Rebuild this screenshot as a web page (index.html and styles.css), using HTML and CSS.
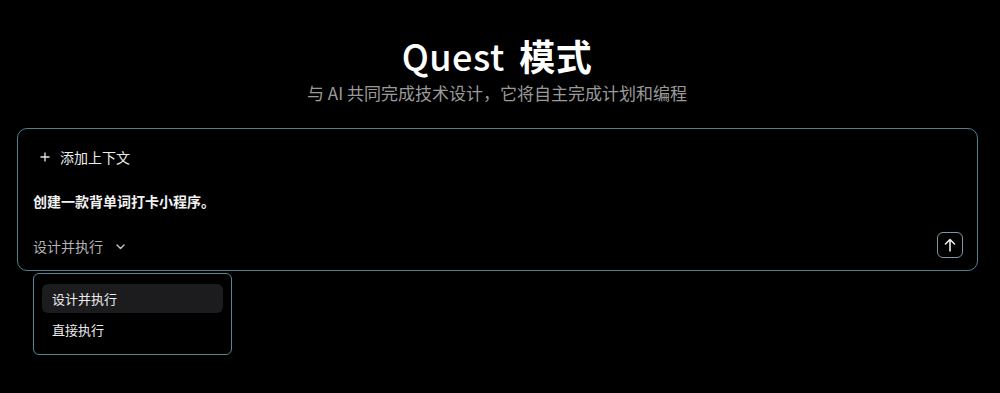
FILE: index.html
```html
<!DOCTYPE html>
<html lang="zh">
<head>
<meta charset="utf-8">
<title>Quest 模式</title>
<link rel="stylesheet" href="styles.css">
</head>
<body>
<main class="page">
  <header class="hero">
    <h1 class="title">Quest <span class="title-cn">模式</span></h1>
    <p class="subtitle">与 AI 共同完成技术设计，它将自主完成计划和编程</p>
  </header>
  <div class="composer-wrap">
    <section class="composer">
      <button class="add-context" type="button">
        <svg class="plus" width="10" height="10" viewBox="0 0 10 10"><path d="M5 0.5V9.5M0.5 5H9.5" stroke="#e8e8e8" stroke-width="1.3" fill="none"/></svg>
        <span>添加上下文</span>
      </button>
      <p class="prompt">创建一款背单词打卡小程序。</p>
      <div class="composer-footer">
        <button class="mode-select" type="button">
          <span>设计并执行</span>
          <svg class="chev" width="9" height="6" viewBox="0 0 9 6"><path d="M1 1L4.5 4.5L8 1" stroke="#c8c8c8" stroke-width="1.4" fill="none" stroke-linecap="round" stroke-linejoin="round"/></svg>
        </button>
        <button class="send" type="button" aria-label="发送">
          <svg width="12" height="14" viewBox="0 0 12 14"><path d="M6 13V1.5M1.5 6L6 1.5L10.5 6" stroke="#eeeeee" stroke-width="1.6" fill="none" stroke-linecap="round" stroke-linejoin="round"/></svg>
        </button>
      </div>
    </section>
    <ul class="menu">
      <li class="menu-item active">设计并执行</li>
      <li class="menu-item">直接执行</li>
    </ul>
  </div>
</main>
</body>
</html>
```

FILE: styles.css
```css
* { box-sizing: border-box; }
html, body { margin: 0; padding: 0; background: #000; }
body {
  width: 1000px;
  height: 393px;
  overflow: hidden;
  font-family: "Noto Sans CJK SC", "Noto Sans", sans-serif;
  color: #f0f0f0;
}
.page {
  display: flex;
  flex-direction: column;
  padding-top: 33px;
}
.hero {
  display: flex;
  flex-direction: column;
  align-items: center;
  padding-right: 6px;
}
.title {
  margin: 0;
  font-size: 36px;
  line-height: 44px;
  font-weight: 500;
  color: #ffffff;
  letter-spacing: 0.5px;
}
.title-cn { margin-left: 6px; font-weight: 700; }
.subtitle {
  margin: 5px 0 0;
  font-size: 17px;
  line-height: 22px;
  color: #9a9a9a;
}
.composer-wrap {
  position: relative;
  margin: 24px 0 0 17px;
  width: 961px;
}
.composer {
  border: 1.5px solid #4f808b;
  border-radius: 10px;
  height: 143px;
  padding: 17px 14px 12px 15px;
  display: flex;
  flex-direction: column;
}
button {
  font-family: inherit;
  background: none;
  border: none;
  padding: 0;
  color: inherit;
  cursor: pointer;
}
.add-context {
  display: flex;
  align-items: center;
  gap: 10px;
  align-self: flex-start;
  margin-left: 7px;
  height: 22px;
  font-size: 14px;
  color: #ececec;
}
.prompt {
  margin: 22px 0 0;
  font-size: 14px;
  line-height: 22px;
  font-weight: 600;
  color: #f2f2f2;
}
.composer-footer {
  margin-top: auto;
  display: flex;
  align-items: center;
  justify-content: space-between;
}
.mode-select {
  display: flex;
  align-items: center;
  gap: 13px;
  font-size: 14px;
  color: #b4b4b4;
  margin-top: 2px;
}
.chev { margin-top: 2px; }
.send {
  width: 26px;
  height: 26px;
  border: 1.5px solid #7d98a0;
  border-radius: 6px;
  display: flex;
  align-items: center;
  justify-content: center;
}
.menu {
  position: absolute;
  left: 16px;
  top: 145px;
  width: 199px;
  height: 82px;
  margin: 0;
  list-style: none;
  padding: 10px 8px;
  border: 1.5px solid #548894;
  border-radius: 6px;
  background: #000;
}
.menu-item {
  height: 29px;
  display: flex;
  align-items: center;
  padding-left: 10px;
  font-size: 13px;
  color: #ececec;
  border-radius: 6px;
  margin-bottom: 2px;
}
.menu-item.active { background: #1c1c1e; }
```
